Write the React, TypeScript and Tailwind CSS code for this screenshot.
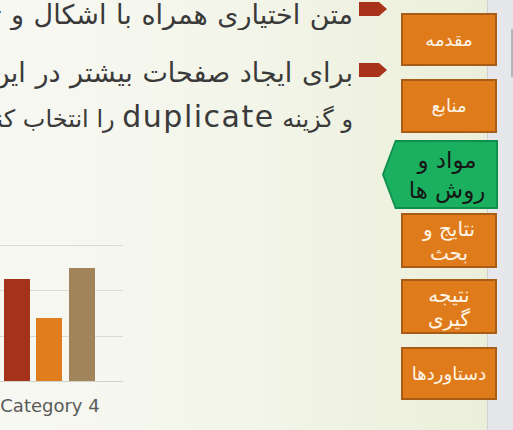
import React from "react";

const fa = { fontFamily: '"DejaVu Sans", sans-serif' };

function Bullet() {
  return (
    <svg width="28" height="14" viewBox="0 0 28 14" className="shrink-0">
      <polygon points="0,0 20,0 28,7 20,14 0,14" fill="#a9321b" />
    </svg>
  );
}

function NavButton({ lines, className }: { lines: string[]; className: string }) {
  return (
    <div
      className={`flex w-[96px] flex-col items-center justify-center border-2 border-[#a95c16] bg-[#e07b1b] text-[#fff5e6] ${className}`}
      style={fa}
      dir="rtl"
    >
      {lines.map((l) => (
        <span key={l} className="whitespace-nowrap">{l}</span>
      ))}
    </div>
  );
}

export default function App() {
  return (
    <div className="flex h-[430px] w-[513px] overflow-hidden">
      <div className="flex w-[487px] shrink-0 bg-gradient-to-r from-[#f8f8f3] via-[#f3f5e9] to-[#ebefda]">
        {/* slide content */}
        <div className="flex min-w-0 flex-1 flex-col overflow-hidden">
          <div className="flex items-start justify-end pr-[14px]" dir="ltr">
            <div
              className="min-w-0 overflow-hidden whitespace-nowrap text-right text-[27px] leading-[30px] text-[#3a3a3a] [word-spacing:1px]"
              dir="rtl"
              style={fa}
            >
              متن اختیاری همراه با اشکال و تصاویر
            </div>
            <div className="ml-[6px] mt-[2px]">
              <Bullet />
            </div>
          </div>

          <div className="mt-[21px] flex items-start justify-end pr-[14px]" dir="ltr">
            <div
              className="min-w-0 overflow-hidden whitespace-nowrap text-right leading-[44px] text-[#3a3a3a]"
              dir="rtl"
              style={fa}
            >
              <div className="text-[27px] [word-spacing:1px]">برای ایجاد صفحات بیشتر در این قالب روی اسلاید کلیک راست کنید</div>
              <div className="text-[24px]">
                و گزینه{"  "}
                <span className="text-[30px] tracking-[1.5px]">duplicate</span> را انتخاب کنید
              </div>
            </div>
            <div className="ml-[6px] mt-[12px]">
              <Bullet />
            </div>
          </div>

          {/* chart fragment */}
          <div className="mt-[104px] grid w-[123px]">
            <div className="col-start-1 row-start-1 flex h-[137px] flex-col justify-between">
              <div className="h-px bg-[#dadad6]" />
              <div className="h-px bg-[#dadad6]" />
              <div className="h-px bg-[#dadad6]" />
              <div className="h-px bg-[#d2d2ce]" />
            </div>
            <div className="col-start-1 row-start-1 flex h-[136px] items-end pl-[4px]">
              <div className="h-[102px] w-[26px] bg-[#a5321a]" />
              <div className="ml-[6px] h-[63px] w-[26px] bg-[#e07d1c]" />
              <div className="ml-[7px] h-[113px] w-[26px] bg-[#a2845a]" />
            </div>
          </div>
          <div
            className="mt-[12px] w-[100px] whitespace-nowrap text-center text-[18px] leading-[24px] text-[#5a5a5a]"
            style={fa}
          >
            Category 4
          </div>
        </div>

        {/* navigation */}
        <nav className="relative z-10 -mr-[10px] flex w-[96px] shrink-0 flex-col pt-[13px]">
          <NavButton lines={["مقدمه"]} className="h-[53px] text-[18px] leading-[24px]" />
          <NavButton lines={["منابع"]} className="mt-[13px] h-[54px] text-[18px] leading-[24px]" />
          <div className="mt-[7px] -ml-[19px] h-[69px] w-[116px] bg-[#0f8f4c] [clip-path:polygon(13px_0,100%_0,100%_100%,13px_100%,0_50%)]">
            <div
              className="m-[2px] flex h-[65px] flex-col items-center justify-center bg-[#1bb060] pl-[14px] text-[23px] leading-[30px] text-[#161616] [clip-path:polygon(12px_0,100%_0,100%_100%,12px_100%,0_50%)]"
              style={fa}
              dir="rtl"
            >
              <span>مواد و</span>
              <span>روش ها</span>
            </div>
          </div>
          <NavButton lines={["نتایج و", "بحث"]} className="mt-[4px] h-[55px] text-[20px] leading-[24px]" />
          <NavButton lines={["نتیجه", "گیری"]} className="mt-[11px] h-[55px] text-[20px] leading-[24px]" />
          <NavButton lines={["دستاوردها"]} className="mt-[13px] h-[53px] text-[18px] leading-[24px]" />
        </nav>
      </div>

      {/* side panel */}
      <div className="flex flex-1 justify-end border-l border-[#cdd0d4] bg-[#e6e7eb]">
        <div className="mt-[29px] h-[48px] w-[2px] bg-[#b4b6ba]" />
      </div>
    </div>
  );
}
